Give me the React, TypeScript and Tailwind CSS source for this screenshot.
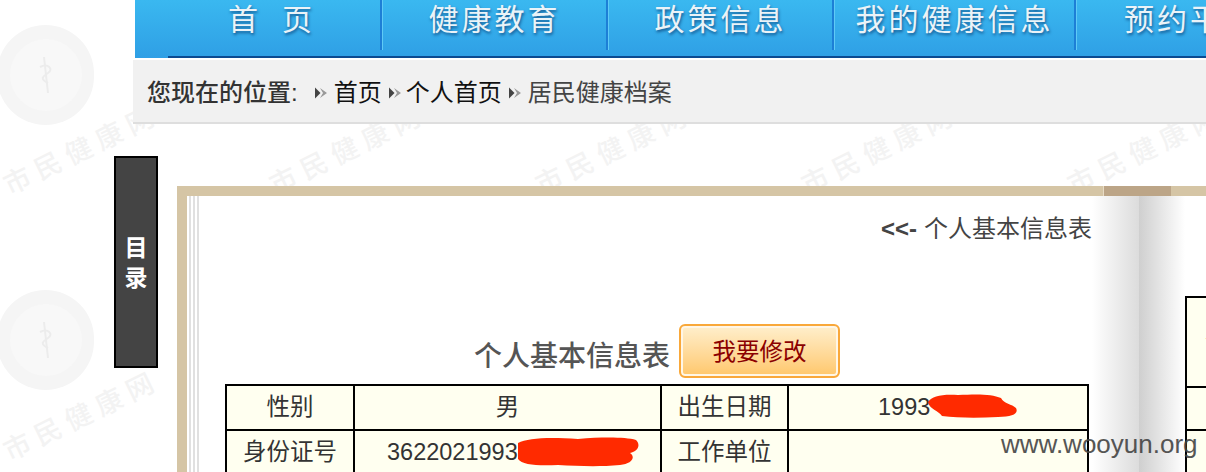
import React from 'react';

const navItems = [
  { label: '健康教育', width: 'w-[226px]' },
  { label: '政策信息', width: 'w-[226px]' },
  { label: '我的健康信息', width: 'w-[242px]' },
];

const watermarkColumns = [82, 348, 614, 880, 1146];
const watermarkRows = [150, 416];

const Watermark = () => (
  <div className="absolute inset-0 overflow-hidden">
    {[75, 340].map((top) => (
      <div
        key={top}
        className="absolute left-[-3px] w-[97px] h-[100px] rounded-full bg-[#f5f5f5] flex items-center justify-center"
        style={{ top: top - 50 }}
      >
        <div className="w-[72px] h-[72px] rounded-full bg-[#f8f8f8] flex items-center justify-center">
          <svg width="24" height="40" viewBox="0 0 24 40" fill="none" stroke="#ececec" strokeWidth="2">
            <path d="M10 2 L14 38" />
            <path d="M6 12 C14 8 20 14 14 18 C8 22 6 24 14 28" />
          </svg>
        </div>
      </div>
    ))}
    {watermarkRows.map((y) =>
      watermarkColumns.map((x) => (
        <div
          key={`${x}-${y}`}
          className="absolute w-[180px] text-center text-[27px] leading-[32px] tracking-[7px] text-[#f3f3f3] font-medium -rotate-[26deg] whitespace-nowrap"
          style={{ left: x - 90, top: y - 16 }}
        >
          市民健康网
        </div>
      )),
    )}
  </div>
);

const Crumb = () => (
  <svg width="14" height="14" viewBox="0 0 14 14" className="shrink-0 block">
    <path d="M1 1.5 L6.5 7 L1 12.5 Z" fill="#444" />
    <path d="M6 2 L13 7 L6 12 L9 7 Z" fill="#999" />
  </svg>
);

const Scribble = ({ path, width, height, className }: { path: string; width: number; height: number; className: string }) => (
  <svg width={width} height={height} viewBox={`0 0 ${width} ${height}`} className={`absolute left-full top-1/2 ${className}`}>
    <path d={path} fill="#ff2a00" />
  </svg>
);

const Nav = () => (
  <div className="ml-[135px] h-[58px] bg-gradient-to-b from-[#3ab8f0] to-[#2f9fe5] flex flex-col">
    <div className="h-[56px] flex text-[#eaf3f8] text-[30px] leading-[40px] tracking-[3px] [text-shadow:1px_2px_3px_#155a92] whitespace-nowrap">
      <div className="w-[247px] h-[50px] shrink-0 flex gap-[21px] pl-[93px] border-r-2 border-r-[#1d7fd6] shadow-[1px_0_0_#5fcaf6]">
        <span>首</span>
        <span>页</span>
      </div>
      {navItems.map((item) => (
        <div key={item.label} className={`${item.width} h-[50px] shrink-0 flex justify-center pl-[1px] border-r-2 border-r-[#1d7fd6] shadow-[1px_0_0_#5fcaf6]`}>
          {item.label}
        </div>
      ))}
      <div className="pl-[48px]">预约平台</div>
    </div>
    <div className="h-[2px] ml-[33px] bg-[#0b4a91]" />
  </div>
);

const Breadcrumb = () => (
  <div className="mt-[2px] ml-[133px] h-[64px] bg-[#f1f1f1] border-b-2 border-b-[#dedede] flex items-center pt-[4px] pl-[14px] text-[24px] whitespace-nowrap text-[#111]">
    <span className="text-[#333] font-medium">您现在的位置:</span>
    <span className="ml-[16px] mr-[6px]"><Crumb /></span>
    <span>首页</span>
    <span className="ml-[6px] mr-[4px]"><Crumb /></span>
    <span>个人首页</span>
    <span className="ml-[6px] mr-[6px]"><Crumb /></span>
    <span className="text-[#444]">居民健康档案</span>
  </div>
);

const InfoTable = () => (
  <table className="w-[864px] table-fixed border-collapse bg-[#fffff0] text-[#333] text-[23.5px] text-center">
    <colgroup>
      <col className="w-[128px]" />
      <col className="w-[307px]" />
      <col className="w-[127px]" />
      <col className="w-[300px]" />
    </colgroup>
    <tbody>
      <tr className="h-[45px]">
        <td className="border-2 border-black">性别</td>
        <td className="border-2 border-black">男</td>
        <td className="border-2 border-black">出生日期</td>
        <td className="border-2 border-black text-left pl-[89px]">
          <span className="relative inline-block">
            1993
            <Scribble
              width={90}
              height={24}
              className="-translate-y-[14px] -translate-x-[2px]"
              path="M0 8 C4 2 14 0 30 1 C50 0 64 0 73 4 C76 10 84 10 88 14 C91 20 84 23 70 23 C50 24 30 24 14 22 C10 16 2 16 0 8 Z"
            />
          </span>
        </td>
      </tr>
      <tr className="h-[46px]">
        <td className="border-2 border-black">身份证号</td>
        <td className="border-2 border-black text-left pl-[32px]">
          <span className="relative inline-block">
            3622021993
            <Scribble
              width={122}
              height={30}
              className="-translate-y-[16px]"
              path="M0 6 C10 1 30 0 60 2 C85 0 107 0 118 3 C123 8 120 14 112 16 C118 20 114 27 102 28 C80 30 60 29 40 28 C20 29 4 28 0 22 C-1 16 0 12 0 6 Z"
            />
          </span>
        </td>
        <td className="border-2 border-black">工作单位</td>
        <td className="border-2 border-black" />
      </tr>
    </tbody>
  </table>
);

const Book = () => (
  <div className="ml-[19px] mt-[30px] w-[1029px] shrink-0">
    <div className="h-[10px] flex bg-[#d5c5a5]">
      <div className="w-[926px]" />
      <div className="w-[68px] bg-[#bca587] border-l border-l-[#e8dcc6]" />
    </div>
    <div className="flex h-[300px] border-l-10 border-l-[#d5c5a5]">
      <div className="w-[13px] shrink-0 bg-[repeating-linear-gradient(90deg,#ffffff_0,#ffffff_2px,#e0e0e0_2px,#e0e0e0_4px)]" />
      <div className="w-[892px] shrink-0 bg-white">
        <div className="mt-[17px] h-[32px] flex justify-end items-center text-[24px] text-[#444] whitespace-nowrap">
          <span className="font-bold mr-[7px] text-[24px]">&lt;&lt;-</span>
          个人基本信息表
        </div>
        <div className="mt-[79px] w-[864px] ml-[25px] flex justify-center items-end gap-[9px] pb-[6px]">
          <h2 className="text-[28px] leading-[40px] text-[#555] font-medium whitespace-nowrap mb-[1px]">个人基本信息表</h2>
          <button className="w-[161px] h-[54px] pt-[3px] rounded-[6px] border-2 border-[#f9a83a] bg-gradient-to-b from-[#ffefcc] to-[#ffc76a] text-[#8b0000] text-[23.5px] shadow-[inset_0_0_0_2px_#fff6e6]">
            我要修改
          </button>
        </div>
        <div className="ml-[25px]">
          <InfoTable />
        </div>
      </div>
      <div className="w-[47px] shrink-0 bg-gradient-to-r from-white to-[#dcdcdc]" />
      <div className="w-[46px] shrink-0 bg-gradient-to-r from-[#cfcfcf] to-white" />
      <div className="flex-1 bg-white pt-[100px]">
        <div className="border-2 border-r-0 border-black bg-[#fffff0]">
          <div className="h-[88px] flex items-center pl-[18px] text-[23.5px] text-[#8b3a00] whitespace-nowrap">个</div>
          <div className="h-[43px] border-t-2 border-black" />
          <div className="h-[60px] border-t-2 border-black" />
        </div>
      </div>
    </div>
  </div>
);

const App = () => (
  <div className="relative w-[1206px] h-[472px] overflow-hidden bg-white font-['Liberation_Sans','Noto_Sans_CJK_SC',sans-serif]">
    <Watermark />
    <div className="relative">
      <Nav />
      <Breadcrumb />
      <div className="flex pl-[114px] pt-[32px]">
        <div className="w-[44px] h-[212px] shrink-0 bg-[#444] border-2 border-black flex flex-col items-center justify-center gap-[1px] pt-[3px] text-white font-bold text-[23px] leading-[29px]">
          <span>目</span>
          <span>录</span>
        </div>
        <Book />
      </div>
    </div>
    <div className="absolute left-[1001px] top-[430px] text-[26px] leading-[28px] text-[#444] opacity-90 whitespace-nowrap">
      www.wooyun.org
    </div>
  </div>
);

export default App;
